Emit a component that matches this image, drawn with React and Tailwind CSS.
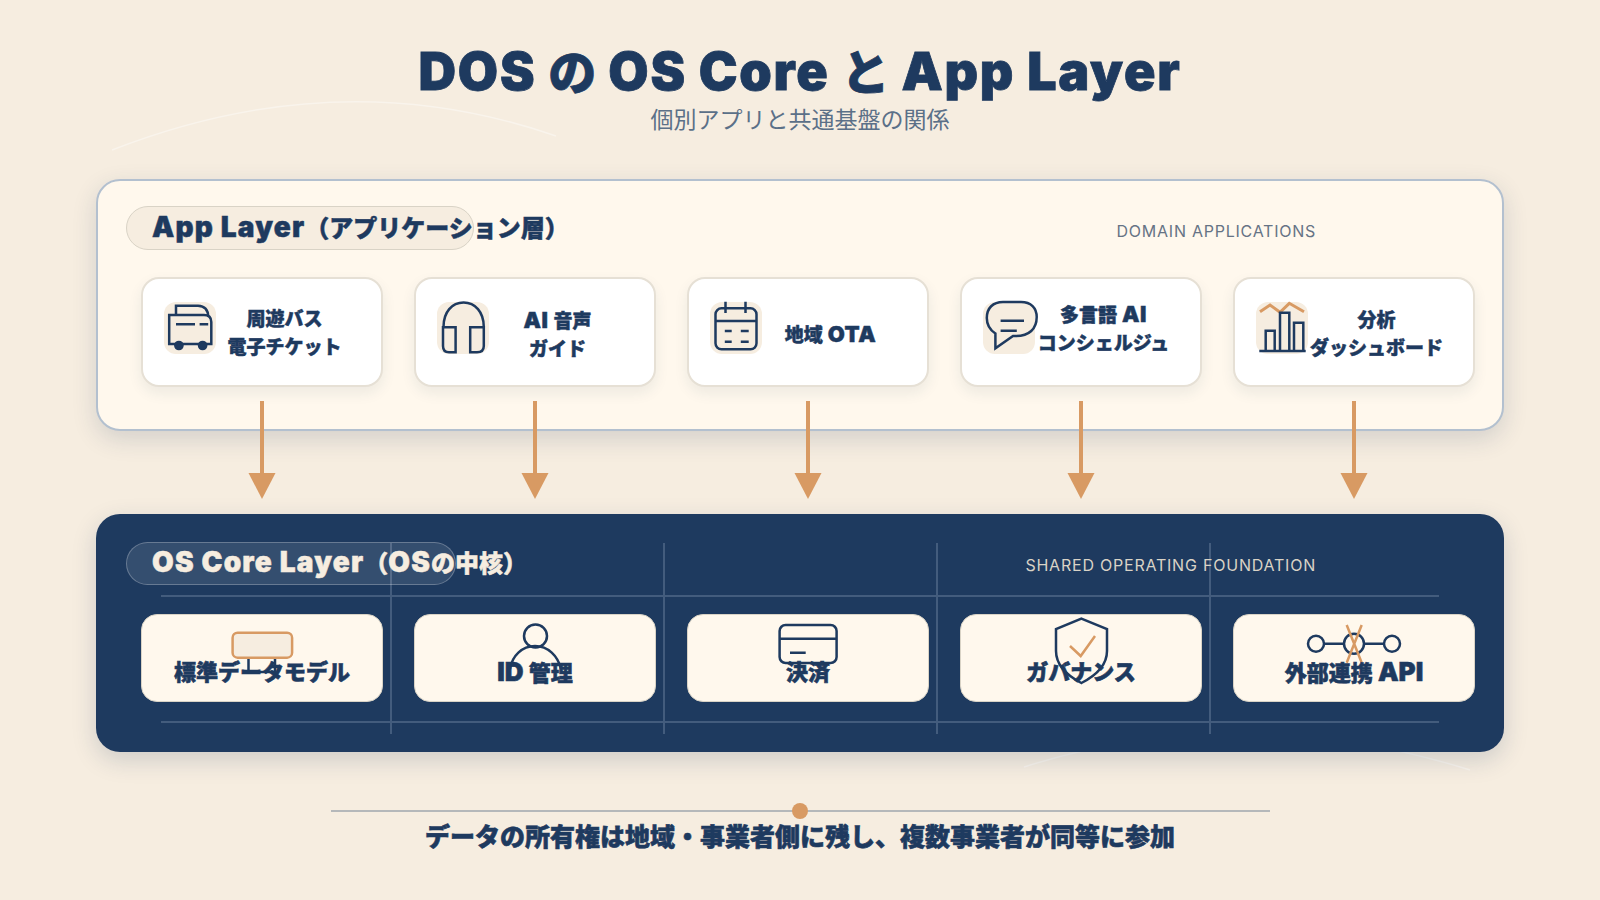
const navy = "#1e3a5f";
const orange = "#d89a63";

const tileClass = "w-[52px] h-[52px] rounded-[12px] bg-[#f6ede0] overflow-visible shrink-0";

const BusIcon = () => (
  <svg viewBox="0 0 52 52" className={tileClass} fill="none" stroke={navy} strokeWidth="2.5">
    <path d="M12 13V3.7H34Q44 4 44.2 14.7" />
    <path d="M5.2 13H40Q47.3 13 47.3 20V42H5.2Z" />
    <path d="M12 22.3H31M35.6 22.3H44.2" />
    <circle cx="14.9" cy="43.5" r="3.6" fill={navy} />
    <circle cx="38.6" cy="43.5" r="3.6" fill={navy} />
  </svg>
);

const HeadphoneIcon = () => (
  <svg viewBox="0 0 52 52" className={tileClass} fill="none" stroke={navy} strokeWidth="2.5">
    <path d="M6.5 25C6.5 10 15 .6 26.6 .6C38 .6 46.8 10 46.8 25" />
    <path d="M6 25.3H18.6V50.3H12Q6 50.3 6 44Z" />
    <path d="M33.2 25.3H46.8V44Q46.8 50.3 40 50.3H33.2Z" />
  </svg>
);

const CalendarIcon = () => (
  <svg viewBox="0 0 52 52" className={tileClass} fill="none" stroke={navy} strokeWidth="2.5">
    <rect x="5.5" y="6.3" width="41" height="41" rx="6" />
    <path d="M5.5 19H46.5M15.5 -.3V11M35.5 -.3V11" />
    <path d="M14.8 29H21.7M30.8 29H38.7M14.8 39.7H21.7M30.8 39.7H38.7" />
  </svg>
);

const ChatIcon = () => (
  <svg viewBox="0 0 52 52" className={tileClass} fill="none" stroke={navy} strokeWidth="2.5">
    <path d="M3.8 16C3.8 6 10 0 20 0H38C48 0 53.7 6 53.7 15C53.7 27 46 34 33 34H30L12.4 46.3V31.5C7 28 3.8 23 3.8 16Z" />
    <path d="M17.6 18.7H41M17.6 28.7H33.8" />
  </svg>
);

const ChartIcon = () => (
  <svg viewBox="0 0 52 52" className={tileClass} fill="none" stroke={navy} strokeWidth="2.5">
    <path d="M4 9.7L14 3L24 10.3L33.3 1.3L48 9.7" stroke={orange} strokeWidth="3" />
    <path d="M9.7 49V28.7H18.7V49M24 49V10.7H33.3V49M38 49V20.7H47.3V49" />
    <path d="M3.3 49H49.7" />
  </svg>
);

const apps = [
  { icon: <BusIcon />, lines: ["周遊バス", "電子チケット"], offset: "mt-[4px]" },
  { icon: <HeadphoneIcon />, lines: ["AI 音声", "ガイド"], offset: "mt-[5px]" },
  { icon: <CalendarIcon />, lines: ["地域 OTA"], offset: "mt-[6px]" },
  { icon: <ChatIcon />, lines: ["多言語 AI", "コンシェルジュ"], offset: "-mt-[6px]" },
  { icon: <ChartIcon />, lines: ["分析", "ダッシュボード"], offset: "mt-[5px]" },
];

const ModelGlyph = () => (
  <g>
    <path d="M106.5 43V57H133V43" stroke={navy} />
    <rect x="90.6" y="17.7" width="59.5" height="25" rx="5" fill="#f6ede0" stroke={orange} />
  </g>
);

const PersonGlyph = () => (
  <g stroke={navy}>
    <circle cx="120.5" cy="21" r="11.5" />
    <path d="M95 54C97 41 107 31 120 31C133 31 143 41 146 54" />
  </g>
);

const CardGlyph = () => (
  <g stroke={navy}>
    <rect x="91.6" y="10" width="57" height="38" rx="6" />
    <path d="M91.6 23.7H148.6M102 37.7H117.7" />
  </g>
);

const ShieldGlyph = () => (
  <g>
    <path d="M120.4 3.7L146 14V36C146 51 134 61 120.4 68C107 61 95 51 95 36V14Z" stroke={navy} />
    <path d="M109 31L119.7 41L134 21" stroke={orange} />
  </g>
);

const NetworkGlyph = () => (
  <g>
    <g stroke={navy}>
      <circle cx="82" cy="28.7" r="8" />
      <circle cx="120" cy="28.7" r="10" />
      <circle cx="158" cy="28.7" r="8" />
      <path d="M90 28.7H110M130 28.7H150" />
    </g>
    <path d="M112.7 10L127.7 47.7M127.7 10L112.7 47.7" stroke={orange} />
  </g>
);

const coreItems = [
  { glyph: <ModelGlyph />, label: "標準データモデル" },
  { glyph: <PersonGlyph />, label: "ID 管理" },
  { glyph: <CardGlyph />, label: "決済" },
  { glyph: <ShieldGlyph />, label: "ガバナンス" },
  { glyph: <NetworkGlyph />, label: "外部連携 API" },
];

// latin runs are set bigger than the kana/kanji next to them
const Mixed = ({ text, latin }) =>
  text.split(/([\x20-\x7e]+)/).map((part, i) =>
    i % 2 === 1 ? (
      <span key={i} className={latin}>
        {part}
      </span>
    ) : (
      part
    )
  );

const App = () => {
  return (
    <div className="relative w-[1600px] h-[900px] overflow-hidden bg-[#f6ede0] [font-family:Inter,'Noto_Sans_CJK_JP',sans-serif] text-[#1e3a5f]">
      {/* faint background arcs */}
      <svg className="absolute inset-0 w-[1600px] h-[900px]" viewBox="0 0 1600 900" fill="none" stroke="#fff" strokeOpacity="0.38" strokeWidth="1.5">
        <path d="M112 150Q340 61 556 136" />
        <path d="M1024 767Q1240 698 1470 770" />
      </svg>

      <div className="relative pt-[41px]">
        <h1 className="h-[62px] text-center text-[48px] leading-[62px] font-black [-webkit-text-stroke:0.8px_#1e3a5f]">
          <Mixed text="DOS の OS Core と App Layer" latin="text-[52px] tracking-[1.7px]" />
        </h1>
        <p className="mt-[1px] text-center text-[23px] leading-[32px] font-normal text-[#5b7088]">個別アプリと共通基盤の関係</p>

        {/* App layer */}
        <section className="mt-[43px] mx-[96px] h-[252px] rounded-[24px] border-2 border-[#b3c0cf] bg-[#fff8ed] shadow-[0_8px_24px_rgba(30,58,95,0.16)]">
          <div className="flex items-center justify-between pt-[25px] pl-[28px] pr-[186px]">
            <div className="w-[348px] h-[44px] rounded-full border border-[#d9d3c6] bg-[#f6ede0] pl-[25px] flex items-center whitespace-nowrap text-[24px] font-black [-webkit-text-stroke:0.5px_#1e3a5f]">
              <span className="-mt-[3px]">
                <Mixed text="App Layer（アプリケーション層）" latin="text-[28px] tracking-[1.2px]" />
              </span>
            </div>
            <span className="mt-[6px] text-[16px] tracking-[0.75px] font-normal text-[#667385]">DOMAIN APPLICATIONS</span>
          </div>
          <div className="ml-[43px] mt-[27px] flex gap-[31px]">
            {apps.map((app) => (
              <div key={app.lines[0]} className="w-[242px] h-[110px] rounded-[18px] border-2 border-[#e6e0d5] bg-white shadow-[0_6px_14px_rgba(30,58,95,0.08)] flex items-center pl-[21px]">
                <div className="self-start mt-[23px]">{app.icon}</div>
                <div className={`w-[137px] text-center whitespace-nowrap text-[19px] leading-[28px] font-black [-webkit-text-stroke:0.5px_#1e3a5f] ${app.offset}`}>
                  {app.lines.map((line) => (
                    <div key={line}>
                      <Mixed text={line} latin="text-[22px] tracking-[0.5px]" />
                    </div>
                  ))}
                </div>
              </div>
            ))}
          </div>
        </section>

        {/* arrows from apps to core */}
        <div className="relative z-10 -mt-[30px] ml-[142px] w-[1332px] h-[98px] flex gap-[33px]">
          {apps.map((app) => (
            <div key={app.lines[0]} className="w-[240px] flex justify-center">
              <svg viewBox="0 0 28 98" className="w-[28px] h-[98px]">
                <path d="M14 0V74" stroke={orange} strokeWidth="4" />
                <path d="M.5 72H27.5L14 98Z" fill={orange} />
              </svg>
            </div>
          ))}
        </div>

        {/* OS core */}
        <section className="relative mt-[15px] mx-[96px] h-[238px] rounded-[24px] bg-[#1e3a5f] shadow-[0_8px_24px_rgba(30,58,95,0.18)]">
          <div className="absolute left-[65px] right-[65px] top-[81px] h-[2px] bg-[#435c7d]" />
          <div className="absolute left-[65px] right-[65px] top-[207px] h-[2px] bg-[#435c7d]" />
          <div className="absolute left-[294px] top-[29px] h-[191px] w-[2px] bg-[#435c7d]" />
          <div className="absolute left-[567px] top-[29px] h-[191px] w-[2px] bg-[#435c7d]" />
          <div className="absolute left-[840px] top-[29px] h-[191px] w-[2px] bg-[#435c7d]" />
          <div className="absolute left-[1113px] top-[29px] h-[191px] w-[2px] bg-[#435c7d]" />

          <div className="relative flex items-center justify-between pt-[28px] pl-[30px] pr-[188px]">
            <div className="w-[330px] h-[43px] rounded-full border border-white/25 bg-white/10 pl-[25px] flex items-center whitespace-nowrap text-[24px] font-black text-[#f6ede0] [-webkit-text-stroke:0.5px_#f6ede0]">
              <span className="-mt-[3px]">
                <Mixed text="OS Core Layer（OSの中核）" latin="text-[28px] tracking-[1.2px]" />
              </span>
            </div>
            <span className="mt-[2px] text-[16px] tracking-[0.78px] font-normal text-[#d9d3c6]">SHARED OPERATING FOUNDATION</span>
          </div>
          <div className="relative ml-[45px] mt-[29px] flex gap-[31px]">
            {coreItems.map((item) => (
              <div key={item.label} className="relative w-[242px] h-[88px] rounded-[16px] border border-[#d9d3c6] bg-[#fff8ed] text-center">
                <svg viewBox="0 0 240 88" className="absolute left-0 top-0 w-[240px] h-[88px] overflow-visible" fill="none" strokeWidth="2.5">
                  {item.glyph}
                </svg>
                <div className="relative pt-[40px] text-[22px] leading-[34px] font-black whitespace-nowrap [-webkit-text-stroke:0.6px_#1e3a5f]">
                  <Mixed text={item.label} latin="text-[26px]" />
                </div>
              </div>
            ))}
          </div>
        </section>

        {/* footer statement */}
        <div className="relative mt-[58px] mx-auto w-[939px] h-[2px] bg-[#b5b8ba]">
          <div className="absolute left-1/2 top-1/2 -translate-x-1/2 -translate-y-1/2 w-[16px] h-[16px] rounded-full bg-[#d89a63]" />
        </div>
        <p className="mt-[7px] text-center text-[25px] leading-[36px] font-black [-webkit-text-stroke:0.6px_#1e3a5f]">データの所有権は地域・事業者側に残し、複数事業者が同等に参加</p>
      </div>
    </div>
  );
};

export default App;
